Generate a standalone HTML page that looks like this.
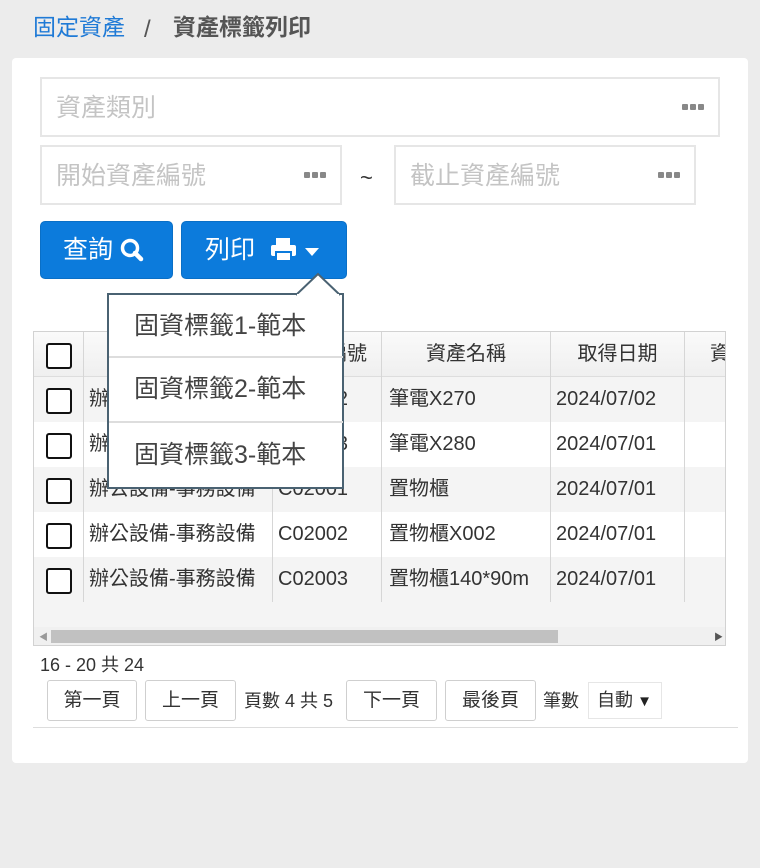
<!DOCTYPE html>
<html><head><meta charset="utf-8">
<style>
*{box-sizing:border-box;margin:0;padding:0}
body{width:760px;height:868px;background:#ececec;font-family:"Liberation Sans","Noto Sans CJK TC",sans-serif;position:relative;overflow:hidden;color:#333}
.a{position:absolute}
.card{left:12px;top:58px;width:736px;height:705px;background:#fff;border-radius:4px}
.inp{border:2px solid #e6e6e6;background:#fff;font-size:25px;color:#c4c4c4;padding-left:14px;line-height:58px;white-space:nowrap}
.dots{position:absolute;right:14px;top:50%;margin-top:-3px;display:flex;gap:2px}
.dots i{width:6px;height:6px;background:#888;border-radius:1px;display:block}
.btn{background:#0c7bdc;border-radius:5px;color:#fff;font-size:25px;display:flex;align-items:center;border:1px solid #0a6fc6;line-height:30px}
.cell{position:absolute;font-size:20px;color:#333;line-height:45px;height:45px;white-space:nowrap;overflow:hidden}
.cb{position:absolute;width:26px;height:26px;border:2px solid #111;border-radius:3px;background:#fff}
.vl{position:absolute;width:1px;background:#d6d6d6}
.pb{position:absolute;top:680px;height:41px;border:1px solid #cfcfcf;border-radius:3px;font-size:19px;line-height:39px;text-align:center;color:#333;background:#fff}
.mi{position:absolute;left:0;width:234px;font-size:25px;color:#444;padding-left:25px;white-space:nowrap}
</style></head><body>
<div class="a" style="left:33px;top:12px;font-size:23px;line-height:30px;color:#1f7ad6">固定資產</div>
<div class="a" style="left:144px;top:15px;font-size:24px;line-height:30px;color:#555">/</div>
<div class="a" style="left:173px;top:12px;font-size:23px;line-height:30px;color:#555;font-weight:bold">資產標籤列印</div>
<div class="a card"></div>
<div class="a inp" style="left:40px;top:77px;width:680px;height:60px">資產類別<div class="dots"><i></i><i></i><i></i></div></div>
<div class="a inp" style="left:40px;top:145px;width:302px;height:60px">開始資產編號<div class="dots"><i></i><i></i><i></i></div></div>
<div class="a" style="left:360px;top:165px;font-size:22px;color:#333">~</div>
<div class="a inp" style="left:394px;top:145px;width:302px;height:60px">截止資產編號<div class="dots"><i></i><i></i><i></i></div></div>
<div class="a btn" style="left:40px;top:221px;width:133px;height:58px;padding-left:22px"><span>查詢</span>
<svg width="26" height="26" viewBox="0 0 26 26" style="margin-left:6px"><circle cx="11" cy="11" r="7.5" fill="none" stroke="#fff" stroke-width="3.5"/><path d="M16 16 L22 22" stroke="#fff" stroke-width="4.5" stroke-linecap="round"/></svg></div>
<div class="a btn" style="left:181px;top:221px;width:166px;height:58px;padding-left:23px"><span>列印</span>
<svg width="30" height="26" viewBox="0 0 30 26" style="margin-left:14px"><rect x="7" y="1" width="14" height="8" fill="#fff"/><rect x="2" y="8" width="25" height="11" rx="2" fill="#fff"/><rect x="7" y="15" width="15" height="9" fill="#fff" stroke="#0c7bdc" stroke-width="2"/></svg>
<svg width="16" height="10" viewBox="0 0 16 10" style="margin-left:5px;margin-top:4px"><path d="M1 1 L15 1 L8 9 Z" fill="#fff"/></svg></div>

<!-- table -->
<div class="a" style="left:33px;top:331px;width:693px;height:315px;border:1px solid #d2d2d2;background:#f4f4f4;overflow:hidden">
 <div class="a" style="left:0;top:0;width:693px;height:45px;background:linear-gradient(#fafafa,#efefef);border-bottom:1px solid #ddd"></div>
 <div class="a" style="left:0;top:90px;width:693px;height:45px;background:#fff"></div>
 <div class="a" style="left:0;top:180px;width:693px;height:45px;background:#fff"></div>
 <div class="vl" style="left:49px;top:0;height:270px"></div>
 <div class="vl" style="left:238px;top:0;height:270px"></div>
 <div class="vl" style="left:347px;top:0;height:270px"></div>
 <div class="vl" style="left:516px;top:0;height:270px"></div>
 <div class="vl" style="left:650px;top:0;height:270px"></div>
 <div class="cell" style="left:239px;top:0;width:108px;text-align:right;padding-right:14px">資產編號</div>
 <div class="cell" style="left:348px;top:0;width:168px;text-align:center">資產名稱</div>
 <div class="cell" style="left:517px;top:0;width:133px;text-align:center">取得日期</div>
 <div class="cell" style="left:676px;top:0;width:30px">資</div>
 <div class="cb" style="left:12px;top:11px"></div>
 <div class="cb" style="left:12px;top:56px"></div>
 <div class="cb" style="left:12px;top:101px"></div>
 <div class="cb" style="left:12px;top:146px"></div>
 <div class="cb" style="left:12px;top:191px"></div>
 <div class="cb" style="left:12px;top:236px"></div>
 <div class="cell" style="left:55px;top:45px">辦公設備-事務設備</div>
 <div class="cell" style="left:55px;top:90px">辦公設備-事務設備</div>
 <div class="cell" style="left:55px;top:135px">辦公設備-事務設備</div>
 <div class="cell" style="left:55px;top:180px">辦公設備-事務設備</div>
 <div class="cell" style="left:55px;top:225px">辦公設備-事務設備</div>
 <div class="cell" style="left:244px;top:45px">C01002</div>
 <div class="cell" style="left:244px;top:90px">C01003</div>
 <div class="cell" style="left:244px;top:135px">C02001</div>
 <div class="cell" style="left:244px;top:180px">C02002</div>
 <div class="cell" style="left:244px;top:225px">C02003</div>
 <div class="cell" style="left:355px;top:45px">筆電X270</div>
 <div class="cell" style="left:355px;top:90px">筆電X280</div>
 <div class="cell" style="left:355px;top:135px">置物櫃</div>
 <div class="cell" style="left:355px;top:180px">置物櫃X002</div>
 <div class="cell" style="left:355px;top:225px">置物櫃140*90m</div>
 <div class="cell" style="left:522px;top:45px">2024/07/02</div>
 <div class="cell" style="left:522px;top:90px">2024/07/01</div>
 <div class="cell" style="left:522px;top:135px">2024/07/01</div>
 <div class="cell" style="left:522px;top:180px">2024/07/01</div>
 <div class="cell" style="left:522px;top:225px">2024/07/01</div>
 <div class="a" style="left:0;top:295px;width:693px;height:18px;background:#f0f0f0"></div>
 <div class="a" style="left:17px;top:298px;width:507px;height:13px;background:#c1c1c1"></div>
 <div class="a" style="left:5px;top:298px;font-size:9px;color:#999">◀</div>
 <div class="a" style="left:680px;top:298px;font-size:9px;color:#555">▶</div>
</div>
<div class="a" style="left:33px;top:727px;width:705px;height:1px;background:#ddd"></div>
<div class="a" style="left:40px;top:653px;font-size:18px;line-height:24px;color:#333">16 - 20 共 24</div>
<div class="pb" style="left:47px;width:90px">第一頁</div>
<div class="pb" style="left:145px;width:91px">上一頁</div>
<div class="a" style="left:244px;top:682px;font-size:18px;line-height:39px">頁數 4 共 5</div>
<div class="pb" style="left:346px;width:91px">下一頁</div>
<div class="pb" style="left:445px;width:91px">最後頁</div>
<div class="a" style="left:543px;top:682px;font-size:18px;line-height:39px">筆數</div>
<div class="a" style="left:588px;top:682px;width:74px;height:37px;border:1px solid #e6e6e6;font-size:18px;line-height:35px;padding-left:8px">自動<span style="font-size:15px;color:#222"> ▼</span></div>

<!-- dropdown -->
<div class="a" style="left:107px;top:293px;width:237px;height:196px;background:#fff;border:2px solid #4a6272">
 <div class="mi" style="top:0;height:63px;line-height:63px;border-bottom:2px solid #ddd">固資標籤1-範本</div>
 <div class="mi" style="top:63px;height:65px;line-height:63px;border-bottom:2px solid #ddd">固資標籤2-範本</div>
 <div class="mi" style="top:128px;height:64px;line-height:64px">固資標籤3-範本</div>
</div>
<svg class="a" style="left:296px;top:272px" width="46" height="24" viewBox="0 0 46 24"><path d="M0 23 L22 2 L44 23" fill="#fff" stroke="#4a6272" stroke-width="2"/><rect x="1" y="22" width="42" height="3" fill="#fff"/></svg>
</body></html>
